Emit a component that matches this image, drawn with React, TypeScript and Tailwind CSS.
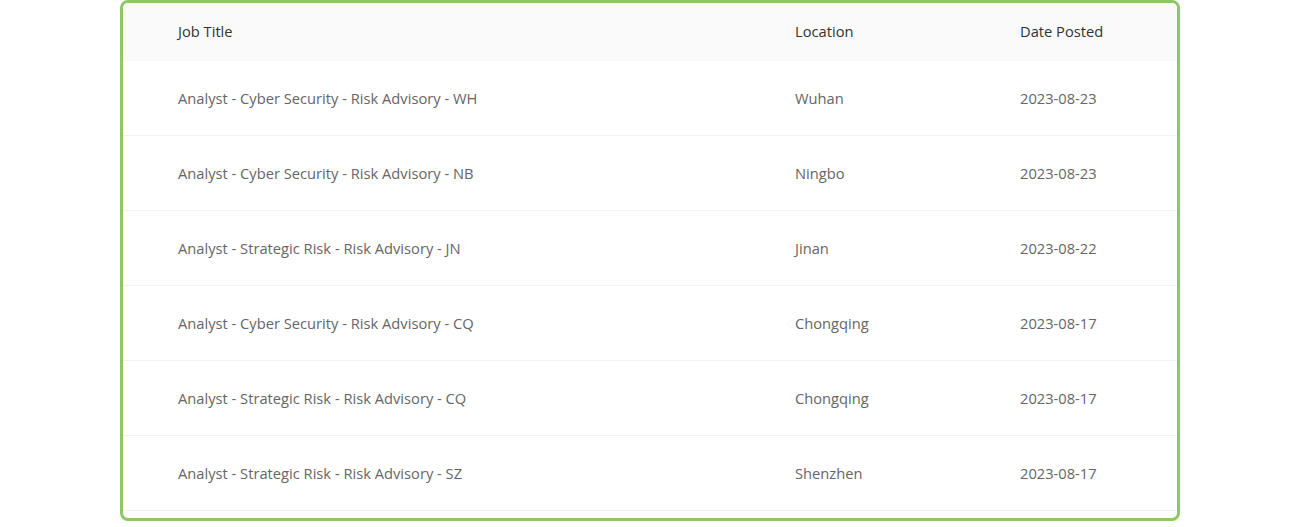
const rows = [
  { title: "Analyst - Cyber Security - Risk Advisory - WH", location: "Wuhan", date: "2023-08-23" },
  { title: "Analyst - Cyber Security - Risk Advisory - NB", location: "Ningbo", date: "2023-08-23" },
  { title: "Analyst - Strategic Risk - Risk Advisory - JN", location: "Jinan", date: "2023-08-22" },
  { title: "Analyst - Cyber Security - Risk Advisory - CQ", location: "Chongqing", date: "2023-08-17" },
  { title: "Analyst - Strategic Risk - Risk Advisory - CQ", location: "Chongqing", date: "2023-08-17" },
  { title: "Analyst - Strategic Risk - Risk Advisory - SZ", location: "Shenzhen", date: "2023-08-17" },
];

export default function App() {
  return (
    <div className="h-[527px] w-full bg-white pl-[120px] font-['Open_Sans',sans-serif] text-[14.7px]">
      <div className="flex h-[521px] w-[1060px] flex-col overflow-hidden rounded-[8px] border-[3px] border-[#8cc865] pb-2">
        <div className="grid h-[58px] shrink-0 grid-cols-[617px_225px_1fr] items-center bg-[#fafafa] pb-[2px] pl-[55px] text-[#333]">
          <div>Job Title</div>
          <div>Location</div>
          <div>Date Posted</div>
        </div>
        {rows.map((r, i) => (
          <div
            key={i}
            className="grid h-[75px] shrink-0 grid-cols-[617px_225px_1fr] items-center border-b border-[#f2f2f2] pl-[55px] text-[#666]"
          >
            <div>{r.title}</div>
            <div>{r.location}</div>
            <div>{r.date}</div>
          </div>
        ))}
      </div>
    </div>
  );
}
